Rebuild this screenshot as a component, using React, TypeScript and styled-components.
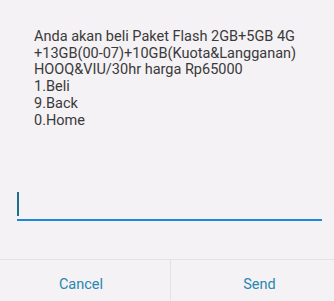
import React from "react";
import styled, { createGlobalStyle } from "styled-components";

const Global = createGlobalStyle`
  html, body { margin: 0; padding: 0; background: #f4f2f5; }
  body { font-family: Roboto, "Noto Sans", sans-serif; }
`;

const Dialog = styled.div`
  width: 334px;
  height: 301px;
  display: flex;
  flex-direction: column;
  background: #f4f2f5;
`;

const Message = styled.div`
  padding: 29px 12px 0 34px;
  font-size: 14.5px;
  line-height: 16.7px;
  color: #3a3a3a;
  white-space: pre-line;
`;

const InputWrap = styled.div`
  margin: 62px 12px 0 17px;
  height: 27px;
  border-bottom: 2px solid #1e88d6;
  display: flex;
  align-items: flex-start;
  padding-top: 1px;
`;

const Caret = styled.div`
  width: 2px;
  height: 24px;
  background: #1f6f8a;
`;

const Spacer = styled.div`
  flex: 1;
`;

const ButtonRow = styled.div`
  display: flex;
  height: 41px;
  border-top: 1px solid #e3e1e4;
`;

const Button = styled.div<{ $width: number; $shift: number; $divider?: boolean }>`
  width: ${(p) => p.$width}px;
  flex-shrink: 0;
  display: flex;
  align-items: center;
  justify-content: center;
  padding-top: 7px;
  padding-left: ${(p) => Math.max(p.$shift, 0) * 2}px;
  padding-right: ${(p) => Math.max(-p.$shift, 0) * 2}px;
  box-sizing: border-box;
  font-size: 14.5px;
  color: #2a87ad;
  border-right: ${(p) => (p.$divider ? "1px solid #e3e1e4" : "none")};
`;

export default function App() {
  return (
    <>
      <Global />
      <Dialog>
        <Message>
          {"Anda akan beli Paket Flash 2GB+5GB 4G\n+13GB(00-07)+10GB(Kuota&Langganan)\nHOOQ&VIU/30hr harga Rp65000\n1.Beli\n9.Back\n0.Home"}
        </Message>
        <InputWrap>
          <Caret />
        </InputWrap>
        <Spacer />
        <ButtonRow>
          <Button $width={171} $shift={-4} $divider>Cancel</Button>
          <Button $width={163} $shift={7}>Send</Button>
        </ButtonRow>
      </Dialog>
    </>
  );
}
